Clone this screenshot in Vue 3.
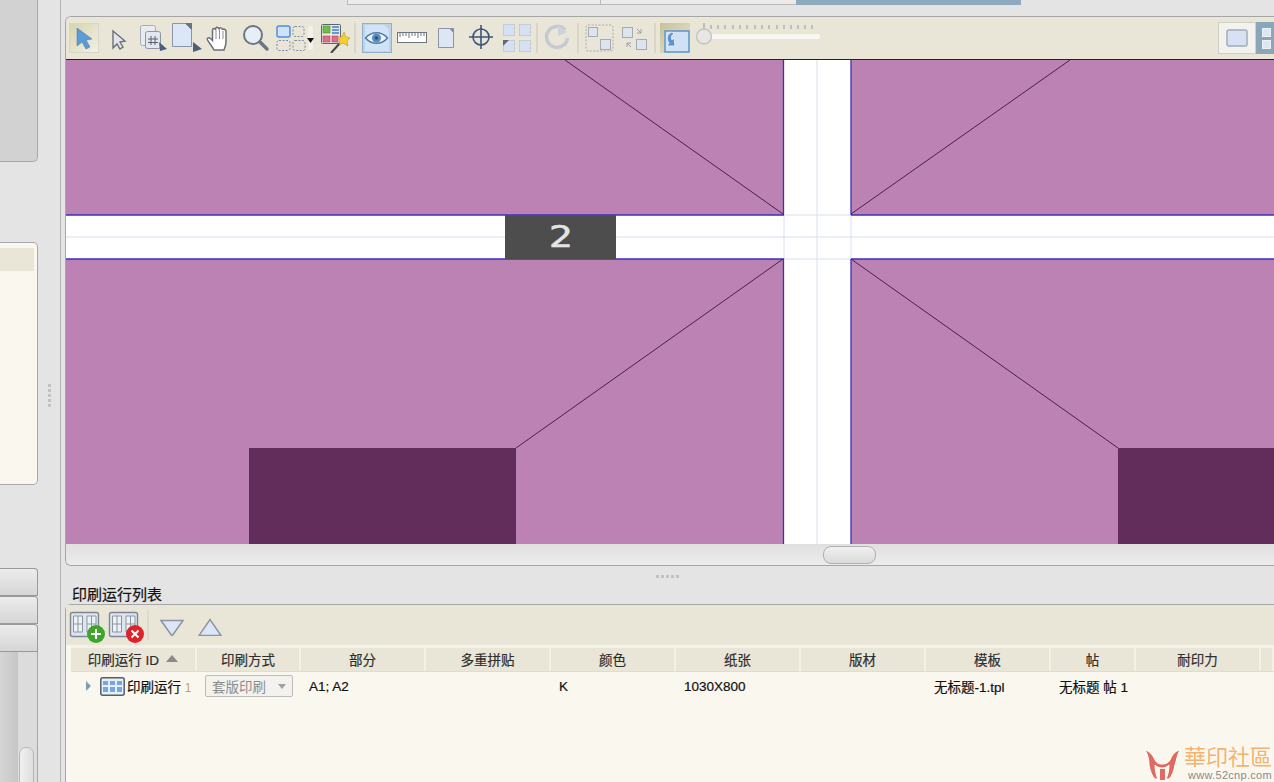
<template>
  <div class="app">
    <!-- left dock, mostly cut off in this view -->
    <aside class="dock">
      <div class="dock-col">
        <div class="dock-top"></div>
        <div class="dock-panel"><div class="dock-panel-head"></div></div>
        <div class="dock-tab"></div>
        <div class="dock-tab"></div>
        <div class="dock-tab"></div>
        <div class="dock-list">
          <div class="dock-list-body"></div>
          <div class="dock-scroll"><div class="dock-thumb"></div></div>
        </div>
      </div>
      <div class="dock-grip"><span class="grip-v"></span></div>
    </aside>

    <main class="main">
      <div class="tabstrip">
        <div class="tab tab-a"></div>
        <div class="tab tab-b"></div>
        <div class="tab tab-on"></div>
      </div>

      <section class="canvas-panel">
        <div class="toolbar">
          <svg class="tool-on" width="30" height="30" viewBox="69 24 30 30">
            <polygon points="77,29 77,47 82,43 86,50 90,48 86,41 92,40" fill="#5b9bd8" stroke="#4a7fb5" stroke-width=".6"/>
          </svg>
          <svg width="37" height="30" viewBox="99 24 37 30">
            <polygon points="113,32 113,49 117,45 120,50 123,48 120,43 125,42" fill="#e4e4e6" stroke="#66707f" stroke-width="1.400"/>
          </svg>
          <svg width="35" height="30" viewBox="136 24 35 30">
            <rect x="140.500" y="26.500" width="15" height="20" rx="2" fill="#e8ebf0" stroke="#a5adb8"/>
            <rect x="145.500" y="32.500" width="15" height="17" rx="2" fill="#e3e7ed" stroke="#8b95a3"/>
            <path d="M151 37v9M155 37v9M148 40h10M148 43.500h10" stroke="#56606e" fill="none"/>
            <polygon points="159,43 167,50 160,52" fill="#4b5f7d"/>
          </svg>
          <svg width="33" height="30" viewBox="171 24 33 30">
            <path d="M172.500 24.500h13l6 6v17h-19z" fill="#dbe6f6" stroke="#8a94a3"/>
            <polygon points="185,24 192,24 192,31" fill="#67738a"/>
            <polygon points="193,43 202,50 193,53" fill="#4b5f7d"/>
          </svg>
          <svg width="33" height="30" viewBox="204 24 33 30">
            <path d="M214 51c-2-4-5-7-6.500-10-1-2 1.500-3 3-1.500l2 2V31c0-2 3-2 3 0 0-3.500 3-3.500 3.500-.500 .5-2.500 3.500-2 3.500 .5 .5-1.500 3.500-1 3.500 1v11c0 3-1 5-2 8z" fill="#fff" stroke="#6b6f75" stroke-width="1.500"/>
            <path d="M216 31v9M219.500 31v9M223 32v8" stroke="#8b8f95" fill="none"/>
          </svg>
          <svg width="37" height="30" viewBox="237 24 37 30">
            <circle cx="253" cy="36" r="9" fill="#e6eef8" stroke="#6c7683" stroke-width="2"/>
            <path d="M260 43l7 7" stroke="#6c7683" stroke-width="3.500" stroke-linecap="round"/>
          </svg>
          <svg width="44" height="30" viewBox="274 24 44 30">
            <rect x="277" y="27" width="13" height="11" rx="2" fill="#cfe2fa" stroke="#4c8fdc" stroke-width="1.500"/>
            <g fill="none" stroke="#7c8aa0" stroke-dasharray="2 1.500">
              <rect x="293" y="27.500" width="11" height="10" rx="2"/>
              <rect x="277" y="41.500" width="13" height="10" rx="2"/>
              <rect x="293" y="41.500" width="12" height="10" rx="2"/>
            </g>
            <rect x="308" y="27" width="5" height="24" rx="2.500" fill="#f4f2e8"/>
            <polygon points="307,39 314,39 310.500,44" fill="#111"/>
          </svg>
          <svg width="36" height="30" viewBox="318 24 36 30">
            <rect x="321.500" y="25.500" width="19" height="19" rx="1" fill="#e8e8ea" stroke="#5c6470"/>
            <rect x="323" y="27" width="7" height="7" fill="#6cc04a" stroke="#3a7a25" stroke-width=".5"/>
            <path d="M332 28h7M332 31h7M332 34h7" stroke="#3f7fc4" stroke-width="1.500"/>
            <rect x="323" y="37" width="7" height="6" fill="#e0708a" stroke="#a03050" stroke-width=".5"/>
            <rect x="332" y="37" width="6" height="6" fill="#e0708a" stroke="#a03050" stroke-width=".5"/>
            <path d="M331 54l9-10" stroke="#444" stroke-width="2"/>
            <polygon points="344,33 346,38 350,39 347,42 348,47 343,44 339,46 340,41 337,38 342,38" fill="#f6d12e" stroke="#a98b1a" stroke-width=".5"/>
          </svg>
          <span class="sep sep-a"></span>
          <svg class="tool-blue" width="30" height="30" viewBox="362 24 30 30">
            <path d="M365 26h19l5 5v21h-24z" fill="#d3e3f6"/>
            <path d="M365.500 39c6-7 16-7 22 0-6 7-16 7-22 0z" fill="#eaf2fb" stroke="#4f7ca8" stroke-width="1.500"/>
            <circle cx="376.500" cy="39" r="4.500" fill="#5a8cbd"/>
            <circle cx="376.500" cy="39" r="1.800" fill="#2d5378"/>
          </svg>
          <svg width="42" height="30" viewBox="392 24 42 30">
            <rect x="397.500" y="33.500" width="29" height="10" fill="#fff" stroke="#6d7580"/>
            <path d="M400 34v4M403 34v3M406 34v3M409 34v5M412 34v3M415 34v3M418 34v5M421 34v3M424 34v3" stroke="#6d7580"/>
          </svg>
          <svg width="30" height="30" viewBox="434 24 30 30">
            <path d="M438.500 29.500h11l4 4v15h-15z" fill="#dde6f3" stroke="#8a94a3"/>
            <polygon points="449,29 454,29 454,34" fill="#8a94a3"/>
          </svg>
          <svg width="35" height="30" viewBox="464 24 35 30">
            <circle cx="481" cy="38" r="8" fill="none" stroke="#3d5578" stroke-width="1.600"/>
            <path d="M481 26v24M469 38h24" stroke="#3d5578" stroke-width="1.600"/>
          </svg>
          <svg width="37" height="30" viewBox="499 24 37 30">
            <g fill="#d5e1f2" stroke="#c6ccd4">
              <rect x="503.500" y="25.500" width="11" height="11"/>
              <rect x="519.500" y="25.500" width="11" height="11"/>
              <rect x="503.500" y="41.500" width="11" height="11"/>
              <rect x="519.500" y="41.500" width="11" height="11"/>
            </g>
            <polygon points="503,41 509,41 503,47" fill="#5f6b7c"/>
          </svg>
          <span class="sep"></span>
          <svg width="39" height="30" viewBox="538 24 39 30">
            <path d="M565 31a10.500 10.500 0 1 0 2.500 8" fill="none" stroke="#c3cad2" stroke-width="3.500"/>
            <polygon points="558,26 567,33 558,37" fill="#ccd3da"/>
          </svg>
          <span class="sep"></span>
          <svg width="38" height="30" viewBox="579 24 38 30">
            <rect x="586" y="26" width="27" height="26" rx="2" fill="none" stroke="#a9adab" stroke-dasharray="2 1.500"/>
            <rect x="588.500" y="28.500" width="9" height="9" fill="#dbe4ef" stroke="#a4abb3"/>
            <rect x="600.500" y="40.500" width="10" height="10" fill="#dbe4ef" stroke="#a4abb3"/>
          </svg>
          <svg width="37" height="30" viewBox="617 24 37 30">
            <rect x="622.500" y="28.500" width="10" height="10" fill="#dbe4ef" stroke="#a4abb3"/>
            <rect x="636.500" y="40.500" width="10" height="10" fill="#dbe4ef" stroke="#a4abb3"/>
            <path d="M637 30l4 4M641 30v4h-4M631 48l-4-4M627 48v-4h4" stroke="#9aa0a6" fill="none"/>
          </svg>
          <span class="sep sep-tail"></span>
          <svg class="tool-khaki" width="30" height="30" viewBox="660 24 30 30">
            <path d="M665 32h24v21h-24z" fill="#d0e1f6" stroke="#5c94cf" stroke-width="1.500"/>
            <path d="M672 33c-5 2-6 7-3 11l-2 3h8l-1-8-2 2c-1-2-1-5 2-6z" fill="#5c94cf" stroke="#eef4fb" stroke-width=".8"/>
          </svg>
          <svg class="slider" width="128" height="30" viewBox="695 24 128 30">
            <path d="M704 24v6M711 26v4M718 26v4M725 26v4M733 26v4M740 26v4M747 26v4M755 26v4M762 26v4M769 26v4M777 26v4M784 26v4M791 26v4M798 26v4M805 26v4M812 26v4" stroke="#8d9aa5"/>
            <rect x="706" y="35" width="114" height="5" rx="2.500" fill="#f8f7f2"/>
            <circle cx="704" cy="37.500" r="7.500" fill="#e6e6e4" stroke="#c4c4c0" stroke-width="1.500"/>
          </svg>
          <div class="view-switch">
            <div class="view-a"><svg width="22" height="18" viewBox="0 0 22 18"><rect x="1" y="1" width="20" height="16" rx="2" fill="#d6e1f3" stroke="#a3abb5" stroke-width="1.500"/></svg></div>
            <div class="view-b">
              <span class="mini"></span>
              <span class="mini"></span>
            </div>
          </div>
        </div>

        <svg class="sheet" width="1208" height="484" viewBox="66 60 1208 484">
          <rect x="66" y="60" width="1208" height="484" fill="#bb82b3"/>
          <rect x="66" y="215" width="1208" height="44" fill="#fff"/>
          <rect x="784" y="60" width="67" height="484" fill="#fff"/>
          <path d="M66 237H1274M817 60V544M784 215V259M851 215V259M784 215H851M784 259H851" stroke="#d8e0ec" fill="none"/>
          <path d="M66 215H784M851 215H1274M66 259H784M851 259H1274M783.500 60V215M851 60V215M783.500 259V544M851 259V544" stroke="#3b2fbf" stroke-width="1.300" fill="none"/>
          <path d="M565 60L783 214M1070 60L851 214M783 259L516 448M851 259L1118 448" stroke="#4a2148" fill="none"/>
          <rect x="249" y="448" width="267" height="96" fill="#632d5b"/>
          <rect x="1118" y="448" width="156" height="96" fill="#632d5b"/>
          <rect x="505" y="215" width="111" height="44" fill="#4d4d4d"/>
          <text x="549" y="247" class="sheet-no" textLength="24" lengthAdjust="spacingAndGlyphs">2</text>
        </svg>

        <div class="hscroll"><div class="hthumb"></div></div>
      </section>

      <div class="split"><span class="grip-h"></span></div>
      <div class="list-title">印刷运行列表</div>

      <section class="list-panel">
        <div class="list-tools">
          <svg width="38" height="36" viewBox="69 607 38 36">
            <rect x="70.500" y="612.500" width="28" height="24" rx="2" fill="#dfe5ee" stroke="#7d8794" stroke-width="1.400"/>
            <path d="M73.500 616h9v16h-9zM87 616h9v16h-9zM73.500 624h9M87 624h9M78 616v16M91.500 616v16" fill="#eef2f7" stroke="#8b95a2"/>
            <circle cx="96" cy="634" r="9" fill="#3da52a"/>
            <path d="M96 629v10M91 634h10" stroke="#fff" stroke-width="2"/>
          </svg>
          <svg width="38" height="36" viewBox="107 607 38 36">
            <rect x="109.500" y="612.500" width="28" height="24" rx="2" fill="#dfe5ee" stroke="#7d8794" stroke-width="1.400"/>
            <path d="M112.500 616h9v16h-9zM126 616h9v16h-9zM112.500 624h9M126 624h9M117 616v16M130.500 616v16" fill="#eef2f7" stroke="#8b95a2"/>
            <circle cx="135" cy="634" r="9" fill="#e0222a"/>
            <path d="M131.500 630.500l7 7M138.500 630.500l-7 7" stroke="#fff" stroke-width="2"/>
          </svg>
          <span class="sep sep-list"></span>
          <svg width="26" height="22" viewBox="160 614 26 22">
            <polygon points="161,620.500 183,620.500 172,636" fill="#dbe6f7" stroke="#8b95a3" stroke-width="1.500"/>
          </svg>
          <svg width="26" height="22" viewBox="198 614 26 22">
            <polygon points="199,635.500 221,635.500 210,619.500" fill="#dbe6f7" stroke="#8b95a3" stroke-width="1.500"/>
          </svg>
        </div>

        <div class="grid grid-head">
          <div v-for="(col, i) in columns" :key="i" class="hcell">
            <span>{{ col }}</span>
            <i v-if="i === 0" class="sort"></i>
          </div>
        </div>

        <div class="grid grid-row">
          <div class="cell cell-id">
            <i class="twist"></i>
            <svg width="25" height="19" viewBox="0 0 25 19">
              <rect x=".8" y=".8" width="23.400" height="17.400" rx="2" fill="#e8eef6" stroke="#535d6b" stroke-width="1.500"/>
              <path d="M3 4h5v4H3zM10 4h5v4h-5zM17 4h5v4h-5zM3 10h5v5H3zM10 10h5v5h-5zM17 10h5v5h-5z" fill="#74a6e8"/>
            </svg>
            <span class="run-name">印刷运行 <em>1</em></span>
          </div>
          <div class="cell cell-select">
            <div class="select">
              <span>套版印刷</span>
              <i class="select-caret"></i>
            </div>
          </div>
          <div class="cell">A1; A2</div>
          <div class="cell"></div>
          <div class="cell">K</div>
          <div class="cell">1030X800</div>
          <div class="cell"></div>
          <div class="cell">无标题-1.tpl</div>
          <div class="cell">无标题 帖 1</div>
          <div class="cell"></div>
          <div class="cell"></div>
        </div>
      </section>
    </main>

    <!-- site watermark stamped on the screenshot -->
    <div class="watermark">
      <svg width="37" height="33" viewBox="0 0 37 33">
        <path d="M1 2c4 1 8 5 10 10 2 3 3 4 7 4s6-1 8-4c2-5 5-9 10-10-3 5-3 9-5 15-1 6-3 11-6 14h-3c2-4 3-9 3-14-2 2-4 3-7 3s-5-1-7-3c0 5 1 10 3 14h-3c-3-3-5-8-6-14C5 11 4 7 1 2z" fill="#df6a60" stroke="#fff" stroke-width="1"/>
        <rect x="16" y="21" width="5" height="11" fill="#df6a60"/>
      </svg>
      <div class="wm-text">
        <div class="wm-name">華印社區</div>
        <div class="wm-url">www.52cnp.com</div>
      </div>
    </div>
  </div>
</template>

<script setup>
const columns = ['印刷运行 ID', '印刷方式', '部分', '多重拼贴', '颜色', '纸张', '版材', '模板', '帖', '耐印力', '']
</script>

<style scoped>
.app {
  position: relative;
  display: flex;
  width: 1274px;
  height: 782px;
  overflow: hidden;
  background: #e4e4e4;
  color: #111;
  font-family: "Liberation Sans", "Noto Sans CJK SC", sans-serif;
  font-size: 13.5px;
}

/* left dock */
.dock {
  display: flex;
  flex: none;
  width: 60px;
  border-right: 1px solid #b4b4b4;
}
.dock-col {
  display: flex;
  flex-direction: column;
  width: 38px;
}
.dock-top {
  height: 162px;
  background: #d2d2d2;
  border: 1px solid #a8a8a8;
  border-width: 0 1px 1px 0;
  border-bottom-right-radius: 5px;
  box-sizing: border-box;
}
.dock-panel {
  height: 243px;
  margin-top: 80px;
  padding-top: 5px;
  background: #faf7ef;
  border: 1px solid #a8a8a8;
  border-left: 0;
  border-radius: 0 5px 5px 0;
  box-sizing: border-box;
}
.dock-panel-head {
  width: 34px;
  height: 23px;
  background: #e9e6d8;
}
.dock-tab {
  height: 28px;
  background: linear-gradient(#ececec, #d6d6d6);
  border: 1px solid #9a9a9a;
  border-left: 0;
  border-radius: 0 4px 0 0;
  box-sizing: border-box;
}
.dock-tab:nth-child(3) {
  margin-top: 83px;
}
.dock-list {
  display: flex;
  flex: 1;
  border-right: 1px solid #a8a8a8;
}
.dock-list-body {
  width: 18px;
  background: linear-gradient(90deg, #d6d6d6, #c6c6c6);
}
.dock-scroll {
  position: relative;
  flex: 1;
  background: #dcdcdc;
}
.dock-thumb {
  position: absolute;
  top: 95px;
  left: 1px;
  width: 15px;
  height: 60px;
  background: linear-gradient(90deg, #f0f0f0, #dedede);
  border: 1px solid #b8b8b8;
  border-radius: 7px;
  box-sizing: border-box;
}
.dock-grip {
  display: flex;
  flex: 1;
  align-items: center;
  justify-content: center;
  padding-top: 10px;
}
.grip-v {
  width: 3px;
  height: 24px;
  background: repeating-linear-gradient(#c2c2c2 0 3px, transparent 3px 5px);
}

/* main column */
.main {
  display: flex;
  flex: 1;
  flex-direction: column;
  min-width: 0;
  padding-left: 4px;
}
.tabstrip {
  display: flex;
  height: 5px;
  margin-bottom: 11px;
  padding-left: 282px;
}
.tab {
  background: #ebebeb;
  border: 1px solid #b9b9b9;
  border-width: 0 0 1px 1px;
  box-sizing: border-box;
}
.tab-a { width: 253px; }
.tab-b { width: 196px; }
.tab-on {
  width: 225px;
  background: #8fa9bd;
  border-color: #8fa9bd;
}

/* canvas panel */
.canvas-panel {
  height: 550px;
  border: 1px solid #a6a6a6;
  border-right: 0;
  border-radius: 6px 0 0 6px;
  box-sizing: border-box;
  overflow: hidden;
}
.toolbar {
  display: flex;
  align-items: center;
  height: 43px;
  padding-left: 3px;
  background: #e9e6d8;
  border-bottom: 1px solid #222;
  box-sizing: border-box;
}
.toolbar svg {
  flex: none;
}
.tool-on {
  background: linear-gradient(135deg, #d6d3ae, #f4f2e4);
  box-shadow: inset 0 0 0 1px #d8d6c6;
}
.tool-blue {
  background: #bcd3e9;
  box-shadow: inset 0 0 0 1px #8fb0cf;
}
.tool-khaki {
  background: linear-gradient(135deg, #c6c298, #e9e6d2);
}
.sep {
  flex: none;
  width: 2px;
  height: 30px;
  background: #d8d6c8;
}
.sep-a {
  margin-right: 6px;
}
.sep-tail {
  margin-right: 4px;
}
.slider {
  margin-left: 5px;
}
.view-switch {
  display: flex;
  flex: none;
  height: 32px;
  margin-left: auto;
}
.view-a {
  display: flex;
  align-items: center;
  justify-content: center;
  width: 38px;
  background: #f2f2ef;
  border: 1px solid #cfcfc8;
  box-sizing: border-box;
}
.view-b {
  display: flex;
  flex-direction: column;
  gap: 3px;
  justify-content: center;
  width: 18px;
  padding-left: 6px;
  background: #8aa7ba;
  box-sizing: border-box;
}
.mini {
  width: 9px;
  height: 9px;
  background: #dde7f4;
  border: 1px solid #eef2f6;
  box-sizing: border-box;
}
.sheet {
  display: block;
}
.hscroll {
  position: relative;
  height: 21px;
  background: linear-gradient(#e0e0e0, #ececec);
}
.hthumb {
  position: absolute;
  top: 2px;
  left: 757px;
  width: 53px;
  height: 18px;
  background: linear-gradient(#f0f0f0, #dadada);
  border: 1px solid #b0b0b0;
  border-radius: 8px;
  box-sizing: border-box;
}

/* splitter + list */
.split {
  display: flex;
  align-items: center;
  justify-content: center;
  height: 20px;
  padding-right: 3px;
}
.grip-h {
  width: 24px;
  height: 3px;
  background: repeating-linear-gradient(90deg, #c2c2c2 0 3px, transparent 3px 5px);
}
.list-title {
  height: 18px;
  padding-left: 7px;
  font-size: 15px;
  line-height: 18px;
  color: #111;
  -webkit-text-stroke: .2px #111;
}
.list-panel {
  flex: 1;
  background: #faf7ef;
  border: 1px solid #a6a6a6;
  border-width: 1px 0 0 1px;
  border-radius: 6px 0 0 0;
}
.list-tools {
  display: flex;
  align-items: center;
  height: 40px;
  padding-left: 3px;
  background: #e9e6d8;
  box-sizing: border-box;
}
.list-tools svg {
  flex: none;
}
.sep-list {
  margin: 0 11px 0 2px;
  background: #dddbcc;
}
.list-tools svg:last-child {
  margin-left: 12px;
}
.grid {
  display: grid;
  grid-template-columns: 126px 104px 125px 125px 125px 125px 125px 125px 85px 125px 1fr;
  margin-left: 5px;
}
.grid-head {
  height: 27px;
  background: #e9e6d8;
  border-top: 3px solid #f4f2e8;
  border-bottom: 1px solid #dcdce0;
  box-sizing: border-box;
}
.hcell {
  display: flex;
  align-items: center;
  justify-content: center;
  gap: 7px;
  padding-bottom: 2px;
  border-right: 2px solid #f3f1e6;
  color: #2e2e2e;
  -webkit-text-stroke: .2px #2e2e2e;
}
.sort {
  width: 0;
  height: 0;
  border: 6px solid transparent;
  border-top: 0;
  border-bottom: 7px solid #8a8a86;
}
.grid-row {
  height: 28px;
  align-items: center;
}
.cell {
  padding-left: 8px;
  white-space: nowrap;
  overflow: hidden;
  -webkit-text-stroke: .2px #111;
}
.cell-id {
  display: flex;
  align-items: center;
  padding-left: 15px;
}
.twist {
  flex: none;
  width: 0;
  height: 0;
  margin-right: 9px;
  border: 5px solid transparent;
  border-left: 5px solid #7f9fb0;
  border-right: 0;
}
.cell-id svg {
  flex: none;
  margin-right: 2px;
}
.run-name {
  overflow: hidden;
}
.run-name em {
  font-style: normal;
  font-size: 12px;
  color: #c9a06a;
  -webkit-text-stroke: 0;
}
.cell-select {
  overflow: visible;
  -webkit-text-stroke: 0;
}
.select {
  display: flex;
  align-items: center;
  justify-content: space-between;
  width: 88px;
  height: 22px;
  padding: 0 6px;
  background: #f3f2ee;
  border: 1px solid #bcbcb8;
  border-radius: 2px;
  box-sizing: border-box;
  color: #8c8c8c;
}
.select-caret {
  width: 0;
  height: 0;
  border: 4px solid transparent;
  border-top: 5px solid #a0a0a0;
  border-bottom: 0;
}
.sheet-no {
  font-family: "DejaVu Sans", sans-serif;
  font-size: 30px;
  fill: #e4e4e4;
  stroke: #e4e4e4;
  stroke-width: .6px;
}

/* watermark */
.watermark {
  position: absolute;
  right: 2px;
  bottom: 1px;
  display: flex;
  gap: 3px;
  align-items: flex-end;
}
.wm-name {
  font-size: 22px;
  line-height: 24px;
  color: #f5b26b;
  font-family: "Noto Sans CJK TC", sans-serif;
  text-shadow: 0 0 2px #fff;
}
.wm-url {
  margin-top: 2px;
  padding-left: 4px;
  font-size: 11px;
  line-height: 12px;
  letter-spacing: .3px;
  color: #8a8a8a;
  font-family: "Liberation Sans", sans-serif;
}
</style>

<style>
html, body {
  margin: 0;
  background: #e4e4e4;
}
</style>
